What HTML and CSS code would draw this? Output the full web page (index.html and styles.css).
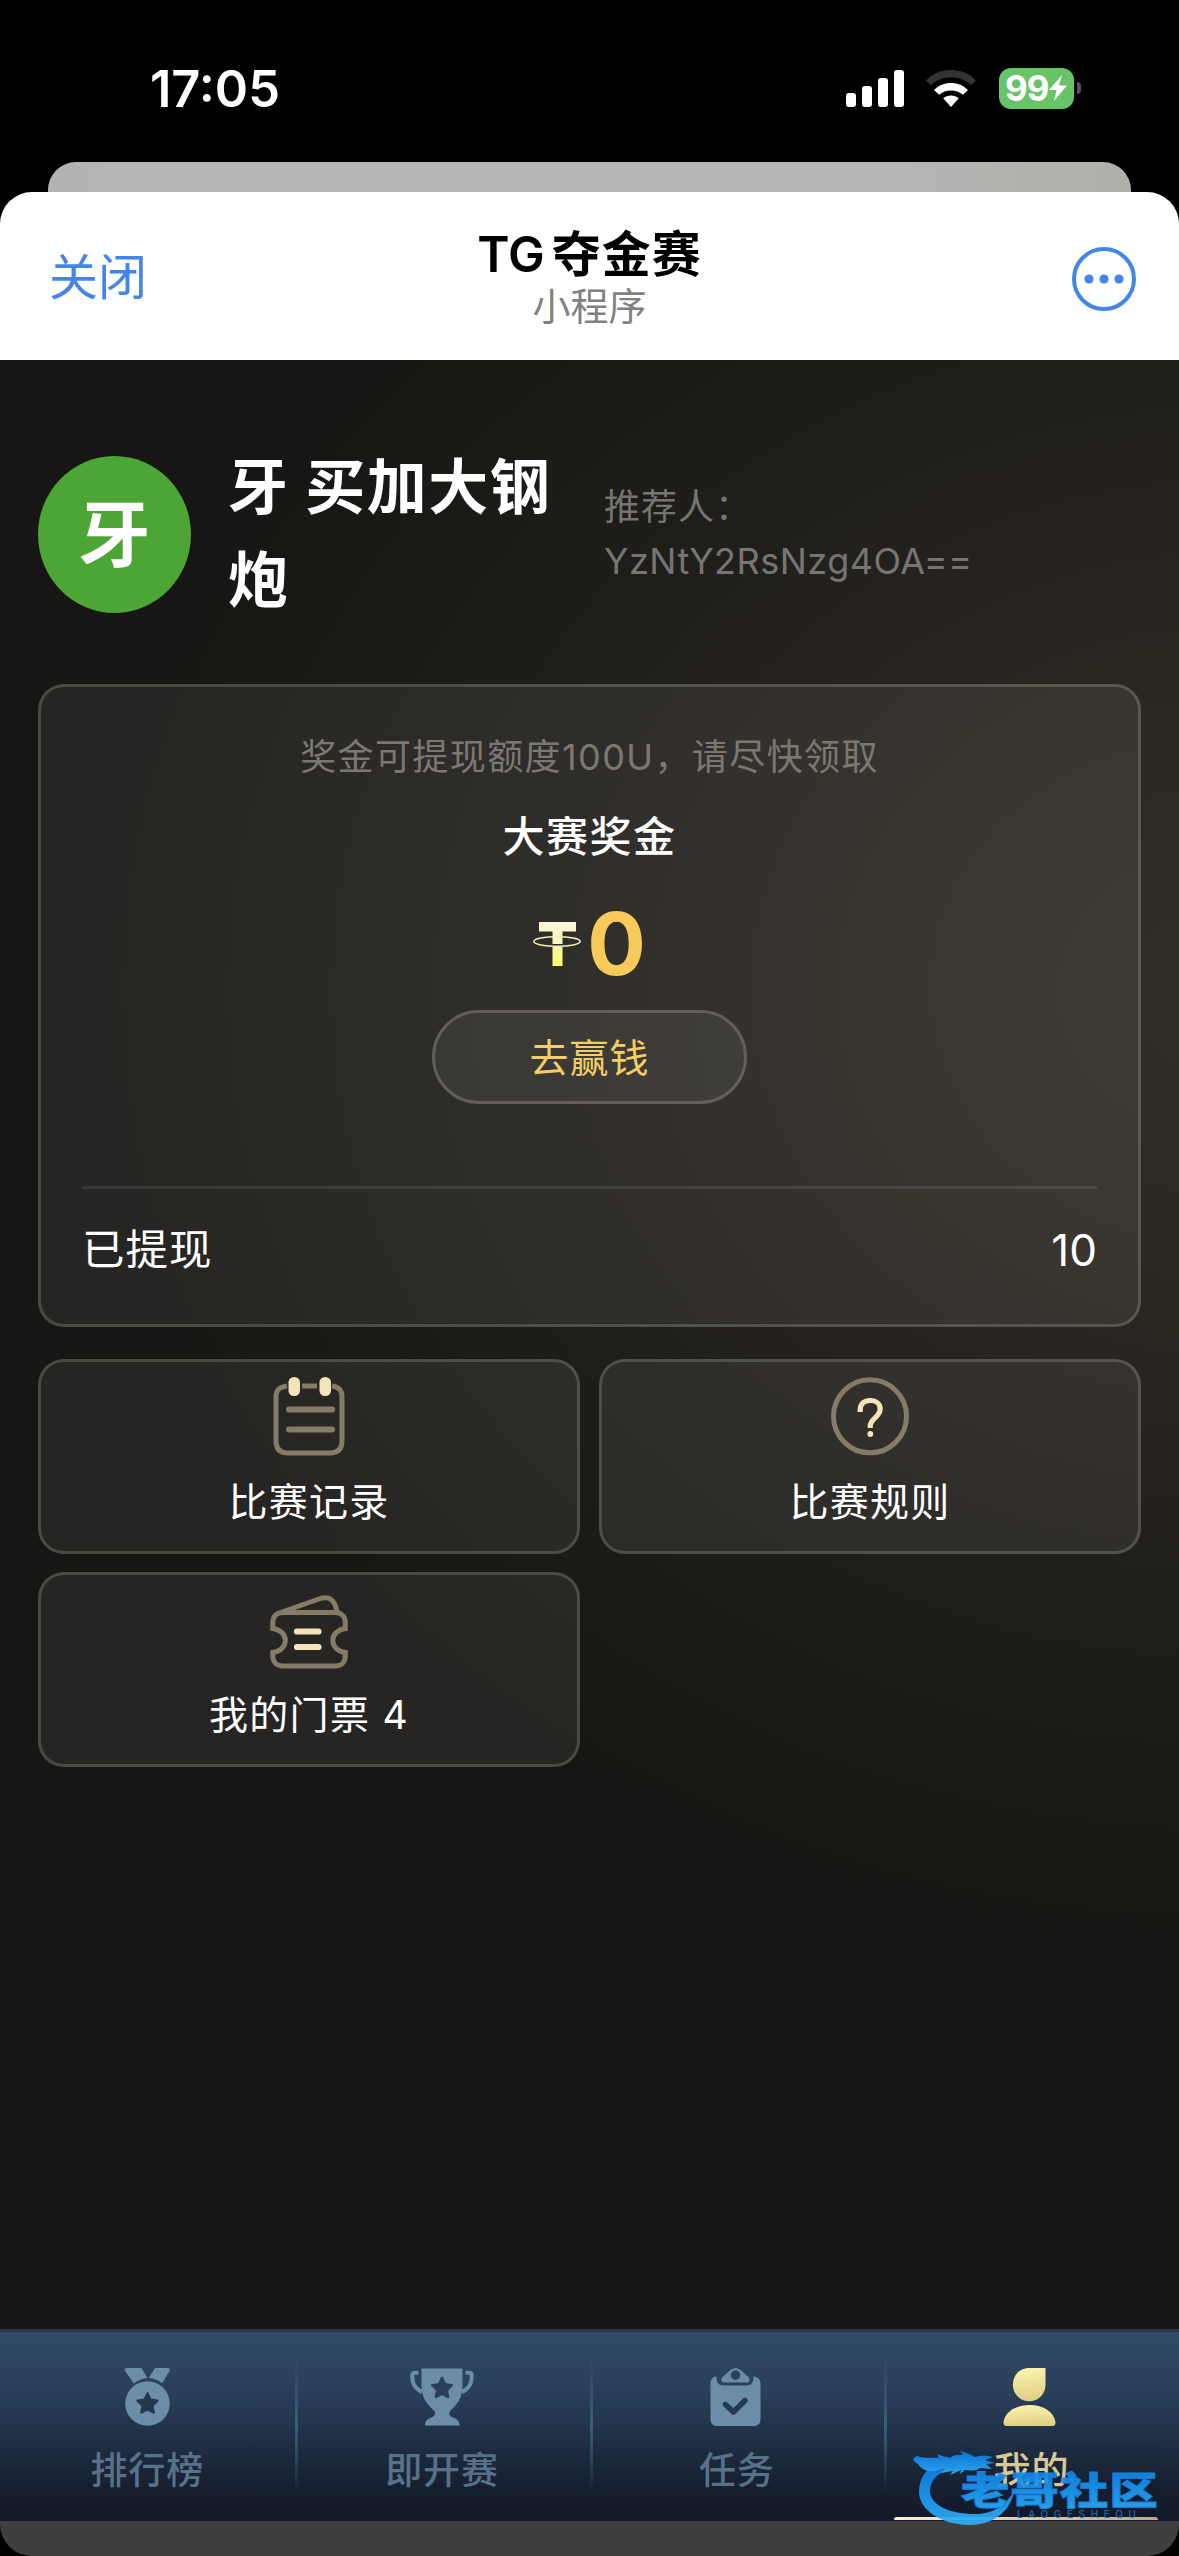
FILE: index.html
```html
<!DOCTYPE html>
<html lang="zh-CN">
<head>
<meta charset="utf-8">
<title>TG夺金赛</title>
<link rel="stylesheet" href="styles.css">
</head>
<body>
<div class="phone">
  <div class="status">
    <span class="clock">17:05</span>
    <div class="status-icons">
      <svg class="signal" width="58" height="37" viewBox="0 0 58 37" fill="#fff">
        <rect x="0" y="23" width="10" height="14" rx="3"/><rect x="16" y="16" width="10" height="21" rx="3"/><rect x="32" y="8" width="10" height="29" rx="3"/><rect x="48" y="0" width="10" height="37" rx="3"/>
      </svg>
      <svg class="wifi" width="50" height="37" viewBox="0 0 50 37">
        <path fill="#333" d="M25 0C15 0 6 4 0 10.500l4.800 4.800C10 10 17 7.500 25 7.500s15 2.500 20.200 7.800l4.800-4.800C44 4 35 0 25 0Z"/>
        <path fill="#fff" d="M25 13c-6.500 0-12.500 2.500-17 7l5 4.800C16.500 22 20.500 20.500 25 20.500s8.500 1.500 12 4.300l5-4.800c-4.500-4.500-10.500-7-17-7ZM25 25.500c-3 0-5.500 1-7.800 2.800L25 37l7.800-8.700C30.500 26.500 28 25.500 25 25.500Z"/>
      </svg>
      <div class="battery">
        <span>99</span>
        <svg width="18" height="26" viewBox="0 0 18 26"><path fill="#fff" d="M13 0 0 15h7.500L5 26 18 10.500h-8Z"/></svg>
      </div>
      <i class="battery-nub"></i>
    </div>
  </div>
  <div class="peek"></div>
  <div class="sheet">
    <header class="header">
      <span class="close">关闭</span>
      <div class="titles">
        <h1 class="title">TG<span class="title-cjk">夺金赛</span></h1>
        <div class="subtitle">小程序</div>
      </div>
      <svg class="more" width="66" height="66" viewBox="0 0 66 66" fill="#4385e8">
        <circle cx="33" cy="33" r="30" fill="none" stroke="#4385e8" stroke-width="4"/>
        <circle cx="18" cy="33" r="4.600"/><circle cx="33" cy="33" r="4.600"/><circle cx="48" cy="33" r="4.600"/>
      </svg>
    </header>
    <main class="page">
      <section class="profile">
        <div class="avatar">牙</div>
        <h2 class="name">牙 买加大钢炮</h2>
        <div class="ref">推荐人：<br><span class="code">YzNtY2RsNzg4OA==</span></div>
      </section>
      <section class="card">
        <p class="note">奖金可提现额度100U，请尽快领取</p>
        <p class="label">大赛奖金</p>
        <div class="amount">
          <svg width="48" height="45" viewBox="0 0 48 45">
            <defs><linearGradient id="coin" x1="0" y1="0" x2="0" y2="1"><stop offset="0" stop-color="#fff8de"/><stop offset=".45" stop-color="#fbf3c0"/><stop offset="1" stop-color="#f8ff62"/></linearGradient></defs>
            <path fill="url(#coin)" d="M6 0h37v9.500H29.500V22h-10V9.500H6ZM19.500 25h10v19h-10Z"/>
            <ellipse cx="24" cy="19.500" rx="23.200" ry="4.800" fill="none" stroke="#f5efc0" stroke-width="1.500"/>
          </svg>
          <span class="num">0</span>
        </div>
        <div class="btn">去赢钱</div>
        <div class="row"><span>已提现</span><span class="row-num">10</span></div>
      </section>
      <section class="grid">
        <div class="tile">
          <svg width="78" height="79" viewBox="-1 0 78 79" fill="none" stroke="#857b66" stroke-width="5">
            <path d="M16 9C7 10 5 14 5 20v44c0 8 4 12 12 12h42c8 0 12-4 12-12V20c0-6-2-10-10-11M31 9h15"/>
            <path d="M18 32.500h43M18 52.500h43" stroke-width="6" stroke-linecap="round"/>
            <g fill="#f3e4bb" stroke="none"><rect x="17.500" y="0" width="11.500" height="19" rx="5.500"/><rect x="48.500" y="0" width="11.500" height="19" rx="5.500"/></g>
          </svg>
          <span>比赛记录</span>
        </div>
        <div class="tile">
          <svg width="78" height="79" viewBox="0 0 78 79" fill="none">
            <circle cx="39" cy="39.300" r="36.500" stroke="#857b66" stroke-width="5"/>
            <path d="M29.200 35v-2c0-6 4-9.500 10-9.500s10 3.500 10 8.500c0 8-10 9.500-10 17v2" stroke="#f3e4bb" stroke-width="5.200"/>
            <circle cx="39.300" cy="57" r="2.900" fill="#f3e4bb"/>
          </svg>
          <span>比赛规则</span>
        </div>
        <div class="tile">
          <svg width="78" height="79" viewBox="0 -3.500 78 79" fill="none" stroke="#857b66" stroke-width="5">
            <path d="M2.800 35v-6c0-6 4-10 10-10h52.500c6 0 10 4 10 10v6c-7 1-12.500 5.500-12.500 12s5.500 11 12.500 12v3.500c0 6-4 10-10 10H12.800c-6 0-10-4-10-10V59c7-1 12.500-5.500 12.500-12S9.800 36 2.800 35Z"/>
            <path d="M12 18.500 49 5.500C59 2 65 6 67 18.500"/>
            <path d="M27 38h21.500M27 53.500h21.500" stroke="#f3e4bb" stroke-width="6.200" stroke-linecap="round"/>
          </svg>
          <span>我的门票 4</span>
        </div>
      </section>
    </main>
    <nav class="tabs">
      <div class="tab">
        <svg width="66" height="58" viewBox="0 0 66 58" fill="#6c8da8">
          <path d="M13 0h14.500l6 10c-5 .5-9.500 2-13.500 5.500L11 3C10 1 11 0 13 0ZM53.500 0H41l-6.200 10c5.500.5 9.700 2 13.200 5.500L55.500 3c1-2 0-3-2-3Z"/>
          <circle cx="33.500" cy="35.500" r="22.300"/>
          <path fill="#24374f" stroke="#24374f" stroke-width="2.500" stroke-linejoin="round" d="m33.500 25.500 3 6.300 6.900.9-5.100 4.800 1.300 6.900-6.100-3.300-6.100 3.300 1.300-6.900-5.100-4.800 6.900-.9Z"/>
        </svg>
        <span>排行榜</span>
      </div>
      <div class="tab">
        <svg width="66" height="58" viewBox="0 0 66 58" fill="#6c8da8">
          <path d="M12.500.5h41V17c0 14-6 20-12.500 26-1.500 4 0 5 4 7 4 1.500 5.500 4 5.500 7.500H16c0-3.500 1.500-6 5.500-7.500 4-2 5.500-3 4-7C19 37 12.500 31 12.500 17Z"/>
          <path d="M9.500 4.800H6.200c-2 0-3 1-3 3 0 8 2.300 11.700 9.800 16.500M56.500 4.800h3.300c2 0 3 1 3 3 0 8-2.300 11.700-9.800 16.500" fill="none" stroke="#6c8da8" stroke-width="4"/>
          <path fill="#293f5a" stroke="#293f5a" stroke-width="2.500" stroke-linejoin="round" d="m33 10 3 6.300 6.900.9-5.100 4.800 1.300 6.900-6.100-3.300-6.100 3.300 1.300-6.900-5.100-4.800 6.900-.9Z"/>
        </svg>
        <span>即开赛</span>
      </div>
      <div class="tab">
        <svg width="66" height="58" viewBox="1.500 0 66 58" fill="#6c8da8">
          <path d="M14 8.500c0 6 2 9 7 9h23c5 0 7-3 7-9 4.500.5 7 3 7 7V51c0 4.500-2.500 7-7 7H15c-4.500 0-7-2.500-7-7V15.500c0-4 1.500-6.500 6-7Z"/>
          <path fill-rule="evenodd" d="M19.500 9.500 28 2c3-2.500 7-2.500 10 0l8.500 7.500c1.500 3 0 5-3 5h-21c-3 0-4.500-2-3-5ZM33 2.300a4.800 4.800 0 1 0 0 9.600 4.800 4.800 0 0 0 0-9.600Z"/>
          <path d="m23 36.500 8 7.500 11.500-11.500" fill="none" stroke="#243952" stroke-width="5.500" stroke-linecap="round" stroke-linejoin="round"/>
        </svg>
        <span>任务</span>
      </div>
      <div class="tab active">
        <svg width="66" height="58" viewBox="2.500 0 66 58">
          <defs><linearGradient id="gold" x1="0" y1="0" x2=".15" y2="1"><stop offset="0" stop-color="#fff5b4"/><stop offset="1" stop-color="#e0d084"/></linearGradient></defs>
          <path fill="url(#gold)" d="M33 0h16v17a16.300 16.300 0 0 1-32.600 0C16.400 7 23 0 33 0Z"/>
          <path fill="url(#gold)" d="M33 37c14 0 24.500 7 26 17 .3 2.500-1 4-3.500 4h-45C8 58 6.700 56.500 7 54c1.500-10 12-17 26-17Z"/>
        </svg>
        <span>我的</span>
        <i class="underline"></i>
        <svg class="stamp" width="258" height="84" viewBox="0 0 258 84">
          <defs><linearGradient id="azure" x1="0" y1="0" x2="0" y2="1"><stop offset="0" stop-color="#0878e4"/><stop offset="1" stop-color="#2fb0f8"/></linearGradient></defs>
          <path fill="url(#azure)" d="M31 17C16 24 9 36 9 49c0 18 23 33 51 33 23 0 41-14 44-34-9 15-21 23-39 23C40 71 20 62 20 48c0-9 6-18 20-21Z"/>
          <path fill="url(#azure)" d="M7 13c8 3 14 1 22 2l-2-4c6 3 9 2 13 4 4-4 8-3 13-3l-3-4c7 1 10 4 15 6 6-2 12-2 18 0l-8 3 10 3-9 1 6 5-12-1c-5 4-10 2-15 2l-5 4 1-4c-5 2-8 4-11 5l3-4-12 2 4-5-10 3c-8 1-14-2-17-7-4-3-8-4-1-8Z"/>
          <path fill="none" stroke="#174b84" stroke-width="1" opacity=".4" d="M33 1c9 8 19 7 31 11M54 0c14 5 22 2 31 10"/>
          <text class="stamp-name" x="51" y="61" textLength="198" lengthAdjust="spacingAndGlyphs" fill="url(#azure)">老哥社区</text>
          <text class="stamp-sub" x="107" y="74.500" textLength="120" fill="#1873b8">LAOGESHEQU</text>
        </svg>
      </div>
    </nav>
    <div class="safe"></div>
  </div>
</div>
</body>
</html>
```
FILE: styles.css
```css
* { box-sizing: border-box; }
body {
  margin: 0;
  background: #000;
  color: #fff;
  font-family: Inter, "Noto Sans CJK SC", sans-serif;
}
h1, h2, p { margin: 0; }
svg { display: block; flex: none; }
.phone {
  width: 1179px;
  height: 2556px;
  display: flex;
  flex-direction: column;
  overflow: hidden;
}

/* status bar */
.status {
  height: 162px;
  padding: 56px 98px 0 150px;
  display: flex;
  justify-content: space-between;
  align-items: flex-start;
}
.clock { font-size: 50.500px; font-weight: 600; line-height: 66px; }
.status-icons { display: flex; align-items: center; height: 64px; }
.wifi { margin-left: 22px; }
.battery {
  width: 75px;
  height: 41px;
  margin-left: 23px;
  padding-left: 6px;
  border-radius: 12px;
  background: #67c567;
  display: flex;
  align-items: center;
  gap: 1px;
  font-size: 35px;
  font-weight: 700;
  letter-spacing: -1px;
  line-height: 41px;
}
.battery-nub {
  width: 4px;
  height: 12px;
  margin-left: 3px;
  border-radius: 0 4px 4px 0;
  background: #555;
}

/* sheets */
.peek {
  height: 30px;
  margin: 0 48px;
  border-radius: 28px 28px 0 0;
  background: linear-gradient(90deg, #b3b3b1, #b6b6b6 10%, #b6b6b6 75%, #afb0aa);
}
.sheet {
  flex: 1;
  display: flex;
  flex-direction: column;
  border-radius: 32px;
  overflow: hidden;
}
.header {
  height: 168px;
  padding: 0 42px 0 49px;
  background: #fff;
  display: grid;
  grid-template-columns: 380px 1fr 387px;
}
.close {
  padding-top: 50px;
  color: #4385e8;
  font-size: 49px;
  line-height: 72px;
}
.titles { color: #000; text-align: center; padding-top: 28px; }
.title {
  font-size: 49px;
  font-weight: 600;
  line-height: 69px;
  white-space: nowrap;
}
.title-cjk { margin-left: 7px; letter-spacing: 1px; font-weight: 600; }
.subtitle { color: #818181; font-size: 38px; line-height: 34px; }
.more { justify-self: end; margin-top: 54px; }

/* content */
.page {
  flex: 1;
  padding: 76px 38px 0;
  background:
    radial-gradient(ellipse 1150px 960px at 1240px 630px, #322e26 0, #2b2822 30%, #211f1b 62%, #171614 100%);
}
.profile { display: flex; height: 248px; align-items: flex-start; }
.avatar {
  width: 153px;
  height: 157px;
  margin-top: 20px;
  border-radius: 50%;
  background: #4ca535;
  font-size: 72px;
  font-weight: 700;
  line-height: 157px;
  text-align: center;
}
.name {
  width: 376px;
  margin-left: 37px;
  padding-top: 5px;
  font-size: 60px;
  font-weight: 700;
  letter-spacing: 1.500px;
  line-height: 93px;
}
.ref {
  padding-top: 44px;
  color: #777573;
  font-size: 36px;
  letter-spacing: 1px;
  line-height: 54px;
}
.code { letter-spacing: .5px; }
.card {
  height: 643px;
  padding: 39px 41px 0;
  border: 3px solid rgba(255, 255, 245, .22);
  border-radius: 26px;
  background: rgba(255, 255, 250, .065);
  background-clip: padding-box;
  display: flex;
  flex-direction: column;
  align-items: center;
}
.note { color: #7b7872; font-size: 36px; letter-spacing: 1.400px; line-height: 63px; }
.label { margin-top: 16px; font-size: 42px; font-weight: 500; letter-spacing: 1.500px; line-height: 64px; }
.amount { display: flex; align-items: center; gap: 6px; margin-top: 20px; height: 110px; }
.num { color: #f7cb5b; font-size: 87px; font-weight: 700; line-height: 110px; }
.btn {
  width: 315px;
  height: 94px;
  margin-top: 11px;
  border: 3px solid #625f59;
  border-radius: 47px;
  background: rgba(255, 255, 255, .06);
  color: #f3cd66;
  font-size: 39px;
  letter-spacing: 1px;
  line-height: 90px;
  text-align: center;
}
.row {
  align-self: stretch;
  margin-top: 82px;
  border-top: 3px solid rgba(255, 255, 255, .09);
  display: flex;
  justify-content: space-between;
  font-size: 42.500px;
  letter-spacing: 1px;
  line-height: 122px;
}
.row-num { font-size: 44px; letter-spacing: 0; }
.grid {
  margin-top: 32px;
  display: grid;
  grid-template-columns: 542px 542px;
  grid-auto-rows: 195px;
  gap: 18px 19px;
}
.tile {
  padding-top: 15px;
  border: 3px solid rgba(255, 255, 245, .22);
  border-radius: 26px;
  background: rgba(255, 255, 250, .065);
  background-clip: padding-box;
  display: flex;
  flex-direction: column;
  align-items: center;
  font-size: 39px;
  letter-spacing: 1.300px;
}
.tile span { margin-top: 16px; line-height: 60px; }

/* bottom tabs */
.tabs {
  height: 192px;
  border-top: 3px solid #2c3645;
  background: linear-gradient(#2f4a66, #2a405c 30%, #213248 53%, #161f30 83%, #13182a);
  display: grid;
  grid-template-columns: repeat(4, 1fr);
}
.tab {
  position: relative;
  padding-top: 36px;
  display: flex;
  flex-direction: column;
  align-items: center;
  color: #587188;
  font-size: 37px;
  font-weight: 500;
  letter-spacing: 1px;
}
.tab span { margin-top: 18px; line-height: 54px; }
.tab:not(:last-child)::after {
  content: "";
  position: absolute;
  right: -3px;
  top: 20px;
  width: 3px;
  height: 142px;
  background: linear-gradient(transparent, #36617b 50%, transparent);
}
.active { color: #d8c897; }
.underline {
  position: absolute;
  left: 10px;
  top: 185px;
  width: 264px;
  height: 3px;
  border-radius: 3px 3px 0 0;
  background: linear-gradient(90deg, #fbf0d2, #b8ab8c);
}
.stamp { position: absolute; left: 26px; top: 111px; overflow: visible; opacity: .93; }
.stamp-name { font: 900 38px "Noto Sans CJK SC", sans-serif; stroke: #168ceb; stroke-width: 1px; }
.stamp-sub { font: 500 10px Inter, sans-serif; }
.safe { height: 35px; background: #3f3f3f; position: relative; z-index: -1; }
```
